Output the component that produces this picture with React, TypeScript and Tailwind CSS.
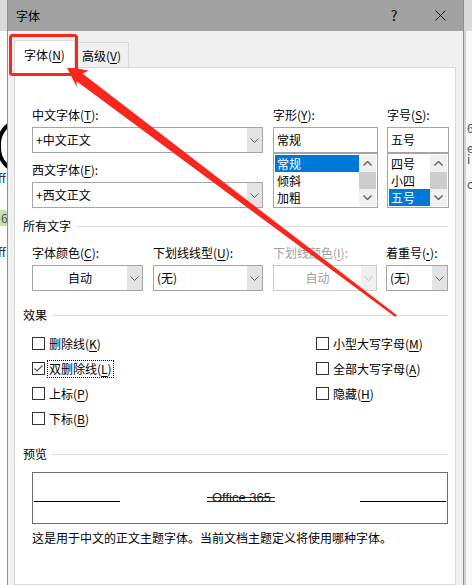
import React from "react";

const cjk = "font-['Noto_Sans_CJK_SC',sans-serif]";

function Key({ k, latin }: { k: string; latin?: boolean }) {
  return (
    <span className={`underline underline-offset-[2px] decoration-1 ${latin ? "font-['Liberation_Sans',sans-serif] font-bold" : ""}`}>
      {k}
    </span>
  );
}

function Label({ text, k, disabled, latin }: { text: string; k: string; disabled?: boolean; latin?: boolean }) {
  return (
    <div className={`h-4 leading-4 text-[12px] whitespace-nowrap ${disabled ? "text-[#a0a0a0]" : "text-black"}`}>
      {text}(<Key k={k} latin={latin} />):
    </div>
  );
}

function ChevronDown({ color = "#606060" }: { color?: string }) {
  return (
    <svg width="9" height="5" viewBox="0 0 9 5">
      <polyline points="0.5,0.5 4.5,4.5 8.5,0.5" fill="none" stroke={color} strokeWidth="1" />
    </svg>
  );
}

function ChevronUp({ color = "#606060" }: { color?: string }) {
  return (
    <svg width="9" height="5" viewBox="0 0 9 5">
      <polyline points="0.5,4.5 4.5,0.5 8.5,4.5" fill="none" stroke={color} strokeWidth="1.4" />
    </svg>
  );
}

function Combo({ value, center, disabled }: { value: string; center?: boolean; disabled?: boolean }) {
  return (
    <div className={`flex h-[26px] border bg-white ${disabled ? "border-[#cccccc]" : "border-[#a5a5a5]"}`}>
      <div
        className={`flex-1 flex items-center px-[3px] text-[12px] whitespace-nowrap ${center ? "justify-center" : ""} ${
          disabled ? "text-[#a0a0a0]" : "text-black"
        }`}
      >
        {value}
      </div>
      <div className={`w-[15px] flex items-center justify-center ${disabled ? "bg-[#f0f0f0]" : "bg-[#e3e3e3]"}`}>
        <ChevronDown color={disabled ? "#c0c0c0" : "#606060"} />
      </div>
    </div>
  );
}

function TextBox({ value }: { value: string }) {
  return (
    <div className="h-[26px] border border-[#a5a5a5] bg-white flex items-center px-[3px] text-[12px]">{value}</div>
  );
}

function ListBox({ items, selected }: { items: string[]; selected: number }) {
  return (
    <div className="h-[55px] border border-[#a5a5a5] bg-white p-[1px] flex">
      <div className="flex-1 flex flex-col">
        {items.map((it, i) => (
          <div
            key={it}
            className={`h-[17px] leading-[17px] px-[2px] text-[12px] ${i === selected ? "bg-[#0078d7] text-white" : "text-black"}`}
          >
            {it}
          </div>
        ))}
      </div>
      <div className="w-[17px] flex flex-col bg-[#f0f0f0]">
        <div className="h-[17px] flex items-center justify-center">
          <ChevronUp />
        </div>
        <div className="h-[17px] bg-[#cdcdcd]" />
        <div className="h-[17px] flex items-center justify-center">
          <svg width="9" height="5" viewBox="0 0 9 5">
            <polyline points="0.5,0.5 4.5,4.5 8.5,0.5" fill="none" stroke="#606060" strokeWidth="1.4" />
          </svg>
        </div>
      </div>
    </div>
  );
}

function Section({ title, className = "" }: { title: string; className?: string }) {
  return (
    <div className={`flex items-center gap-[5px] h-4 leading-4 text-[12px] ${className}`}>
      <span>{title}</span>
      <div className="flex-1 h-px bg-[#dcdcdc]" />
    </div>
  );
}

function Check({ text, k, checked, focused }: { text: string; k: string; checked?: boolean; focused?: boolean }) {
  return (
    <div className="h-[25px] flex items-center">
      <div className="w-[13px] h-[13px] border border-[#333333] bg-white flex items-center justify-center">
        {checked && (
          <svg width="11" height="11" viewBox="0 0 11 11">
            <polyline points="1.5,5.5 4,8 9.5,2.5" fill="none" stroke="#555555" strokeWidth="1.2" />
          </svg>
        )}
      </div>
      <span
        className={`ml-[2px] px-[1px] leading-4 text-[12px] border ${
          focused ? "border-dotted border-black" : "border-transparent"
        }`}
      >
        {text}(<Key k={k} />)
      </span>
    </div>
  );
}

function TitleBar() {
  return (
    <div className="h-[31px] bg-[#a2a2a2] flex items-center pl-[8px] text-[12px]">
      <span className="flex-1">字体</span>
      <div className="w-[46px] text-center text-[14px]">?</div>
      <div className="w-[46px] flex justify-center">
        <svg width="11" height="11" viewBox="0 0 11 11">
          <path d="M0.5 0.5 L10.5 10.5 M10.5 0.5 L0.5 10.5" stroke="#111" strokeWidth="1" />
        </svg>
      </div>
    </div>
  );
}

function Tabs() {
  return (
    <div className="h-[36px] flex items-end pl-[6px] text-[12px]">
      <div className="relative z-10 -mb-px w-[61px] h-[28px] bg-white border border-b-0 border-[#d9d9d9] flex items-center justify-center">
        字体(<Key k="N" />)
      </div>
      <div className="w-[54px] h-[25px] border border-b-0 border-l-0 border-[#d9d9d9] flex items-center justify-center pt-[2px]">
        高级(<Key k="V" />)
      </div>
    </div>
  );
}

function Panel() {
  return (
    <div className="flex-1 ml-[6px] mr-[7px] border border-[#d9d9d9] bg-white pl-[8px] pr-[7px] pt-[39px]">
      {/* font name / style / size */}
      <div className="ml-[9px] grid grid-cols-[231px_105px_61px] gap-x-[10px]">
        <div className="flex flex-col">
          <Label text="中文字体" k="T" />
          <div className="mt-[4px] flex h-[26px] border border-[#a5a5a5] bg-white">
            <div className="flex-1 flex items-center px-[3px] text-[12px]">+中文正文</div>
            <div className="w-[15px] flex items-center justify-center bg-[#e3e3e3]">
              <ChevronDown />
            </div>
          </div>
          <div className="mt-[9px]">
            <Label text="西文字体" k="F" />
          </div>
          <div className="mt-[4px]">
            <Combo value="+西文正文" />
          </div>
        </div>
        <div className="flex flex-col">
          <Label text="字形" k="Y" />
          <div className="mt-[4px]">
            <TextBox value="常规" />
          </div>
          <ListBox items={["常规", "倾斜", "加粗"]} selected={0} />
        </div>
        <div className="flex flex-col -ml-px">
          <Label text="字号" k="S" />
          <div className="mt-[4px]">
            <TextBox value="五号" />
          </div>
          <ListBox items={["四号", "小四", "五号"]} selected={2} />
        </div>
      </div>

      <Section title="所有文字" className="mt-[10px]" />
      <div className="ml-[9px] mt-[11px] grid grid-cols-[111px_110px_104px_61px] gap-x-[10px]">
        <div>
          <Label text="字体颜色" k="C" />
          <div className="mt-[4px]">
            <Combo value="自动" center />
          </div>
        </div>
        <div>
          <Label text="下划线线型" k="U" />
          <div className="mt-[4px]">
            <Combo value="(无)" />
          </div>
        </div>
        <div>
          <Label text="下划线颜色" k="I" disabled />
          <div className="mt-[4px]">
            <Combo value="自动" center disabled />
          </div>
        </div>
        <div className="-ml-px">
          <Label text="着重号" k="·" latin />
          <div className="mt-[4px]">
            <Combo value="(无)" />
          </div>
        </div>
      </div>

      <Section title="效果" className="mt-[16px]" />
      <div className="ml-[9px] mt-[8px] grid grid-cols-[284px_1fr]">
        <div className="flex flex-col">
          <Check text="删除线" k="K" />
          <Check text="双删除线" k="L" checked focused />
          <Check text="上标" k="P" />
          <Check text="下标" k="B" />
        </div>
        <div className="flex flex-col">
          <Check text="小型大写字母" k="M" />
          <Check text="全部大写字母" k="A" />
          <Check text="隐藏" k="H" />
        </div>
      </div>

      <Section title="预览" className="mt-[15px]" />
      <div className="ml-[9px] mt-[10px] w-[416px] h-[52px] border border-[#6d6d6d] flex items-baseline justify-between px-[1px] pt-[17px]">
        <div className="w-[86px] h-px bg-black" />
        <span className="relative ml-[3px] text-[13px] leading-4 text-[#222] font-['Liberation_Sans',sans-serif]">
          Office 365
          <span className="absolute -left-[5px] -right-[4px] top-[7px] h-px bg-[#222]" />
          <span className="absolute -left-[5px] -right-[4px] top-[11px] h-px bg-[#222]" />
        </span>
        <div className="w-[86px] h-px bg-black" />
      </div>
      <div className="ml-[9px] mt-[6px] text-[12px] leading-4 whitespace-nowrap">
        这是用于中文的正文主题字体。当前文档主题定义将使用哪种字体。
      </div>
    </div>
  );
}

// slice of the document window behind the dialog, left side
function DocLeft() {
  return (
    <div className="w-[7px] flex flex-col">
      <div className="h-[31px] bg-[#d9d9d9]" />
      <div className="relative flex-1 bg-white overflow-hidden text-[12px] text-[#333] leading-[12px]">
        <div className="absolute -left-[3px] top-[87px] w-[52px] h-[56px] rounded-full border-[4px] border-black" />
        <span className="absolute -left-[2px] top-[141px]">ff</span>
        <span className="absolute left-0 top-[179px] w-[7px] h-[16px] leading-4 bg-[#c6e0b4] pl-px text-[#555]">6</span>
        <span className="absolute -left-[2px] top-[215px]">ff</span>
      </div>
    </div>
  );
}

// slice of the document window behind the dialog, right side
function DocRight() {
  return (
    <div className="w-[8px] flex flex-col">
      <div className="h-[31px] bg-[#d9d9d9]" />
      <div className="relative flex-1 border-l-[2px] border-[#d2d2d2] bg-[#f7f7f7] overflow-hidden text-[12px] leading-[10px] text-[#555]">
        <span className="absolute left-[1px] top-[92px]">6</span>
        <span className="absolute left-[1px] top-[112px]">e</span>
        <span className="absolute left-[1px] top-[123px]">i</span>
        <span className="absolute left-[1px] top-[148px]">c</span>
      </div>
    </div>
  );
}

export default function App() {
  return (
    <div className={`relative w-[472px] h-[585px] overflow-hidden flex bg-white text-black ${cjk}`}>
      <DocLeft />
      <div className="w-[457px] flex flex-col border-x border-[#8f8f8f] bg-[#f0f0f0]">
        <TitleBar />
        <Tabs />
        <Panel />
      </div>
      <DocRight />

      {/* red annotation: box round the first tab and an arrow pointing at it */}
      <svg className="absolute inset-0 pointer-events-none" width="472" height="585" viewBox="0 0 472 585">
        <rect x="10.5" y="35.5" width="66" height="39" rx="2" fill="none" stroke="#f8261c" strokeWidth="3" />
        <polygon
          points="66,66 88.8,70.7 82.4,73.6 396.7,315.0 395.3,317.0 76.6,81.2 76.7,86.7"
          fill="#f8261c"
        />
      </svg>
    </div>
  );
}
